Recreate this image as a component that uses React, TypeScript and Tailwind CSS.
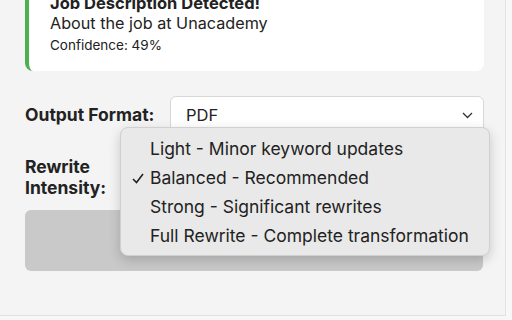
const options = [
  { label: 'Light - Minor keyword updates', checked: false },
  { label: 'Balanced - Recommended', checked: true },
  { label: 'Strong - Significant rewrites', checked: false },
  { label: 'Full Rewrite - Complete transformation', checked: false },
]

function Chevron() {
  return (
    <svg width="11" height="7" viewBox="0 0 11 7" fill="none" stroke="#333" strokeWidth="1.3">
      <polyline points="1,1 5.5,5.5 10,1" />
    </svg>
  )
}

function Check() {
  return (
    <svg width="12" height="11" viewBox="0 0 12 11" fill="none" stroke="#222" strokeWidth="1.6">
      <polyline points="1,6 4.5,9.5 11,1" />
    </svg>
  )
}

export default function App() {
  return (
    <div
      className="relative w-[512px] h-[320px] overflow-hidden bg-[#f7f7f7] text-[#222]"
      style={{ fontFamily: 'Inter, "Liberation Sans", sans-serif' }}
    >
      <div className="w-[506px] h-[316px] bg-[#f4f4f4] border-r border-b border-[#e2e2e2] overflow-hidden">
        <div className="ml-[25px] w-[459px] -mt-[10px] bg-white rounded-lg border-l-4 border-[#4caf50] pl-[21px] pt-[3px] pb-[17px]">
          <div className="text-[16.5px] leading-5 font-bold">Job Description Detected!</div>
          <div className="text-[16.2px] leading-5">About the job at Unacademy</div>
          <div className="text-[13.5px] leading-[18px] mt-[3px]">Confidence: 49%</div>
        </div>

        <div className="ml-[25px] w-[459px] mt-[25px] flex items-center">
          <div className="w-[145px] text-[17.5px] font-bold leading-5 whitespace-nowrap">Output Format:</div>
          <div className="flex-1 h-[38px] bg-white border border-[#d8d8d8] rounded-md flex items-center justify-between pl-[15px] pr-[10px]">
            <span className="text-[16.5px]">PDF</span>
            <Chevron />
          </div>
        </div>

        <div className="ml-[25px] w-[459px] mt-[22px] flex items-center">
          <div className="w-[145px] text-[17.5px] font-bold leading-[21px]">
            Rewrite
            <br />
            Intensity:
          </div>
          <div className="flex-1 h-[38px] bg-white border border-[#d8d8d8] rounded-md" />
        </div>

        <div className="ml-[25px] w-[458px] mt-[12px] h-[61px] bg-[#c9c9c9] rounded-md" />
      </div>

      <div className="absolute left-[120px] top-[127px] w-[370px] h-[129px] bg-[#e9e9e9] rounded-lg border border-[#d0d0d0] shadow-[0_4px_12px_rgba(0,0,0,0.18)] pt-[7px]">
        {options.map((o) => (
          <div key={o.label} className="relative h-[29px] flex items-center pl-[29px] text-[17.5px] text-[#222] whitespace-nowrap">
            {o.checked && (
              <span className="absolute left-[11px] top-[9px]">
                <Check />
              </span>
            )}
            {o.label}
          </div>
        ))}
      </div>
    </div>
  )
}
